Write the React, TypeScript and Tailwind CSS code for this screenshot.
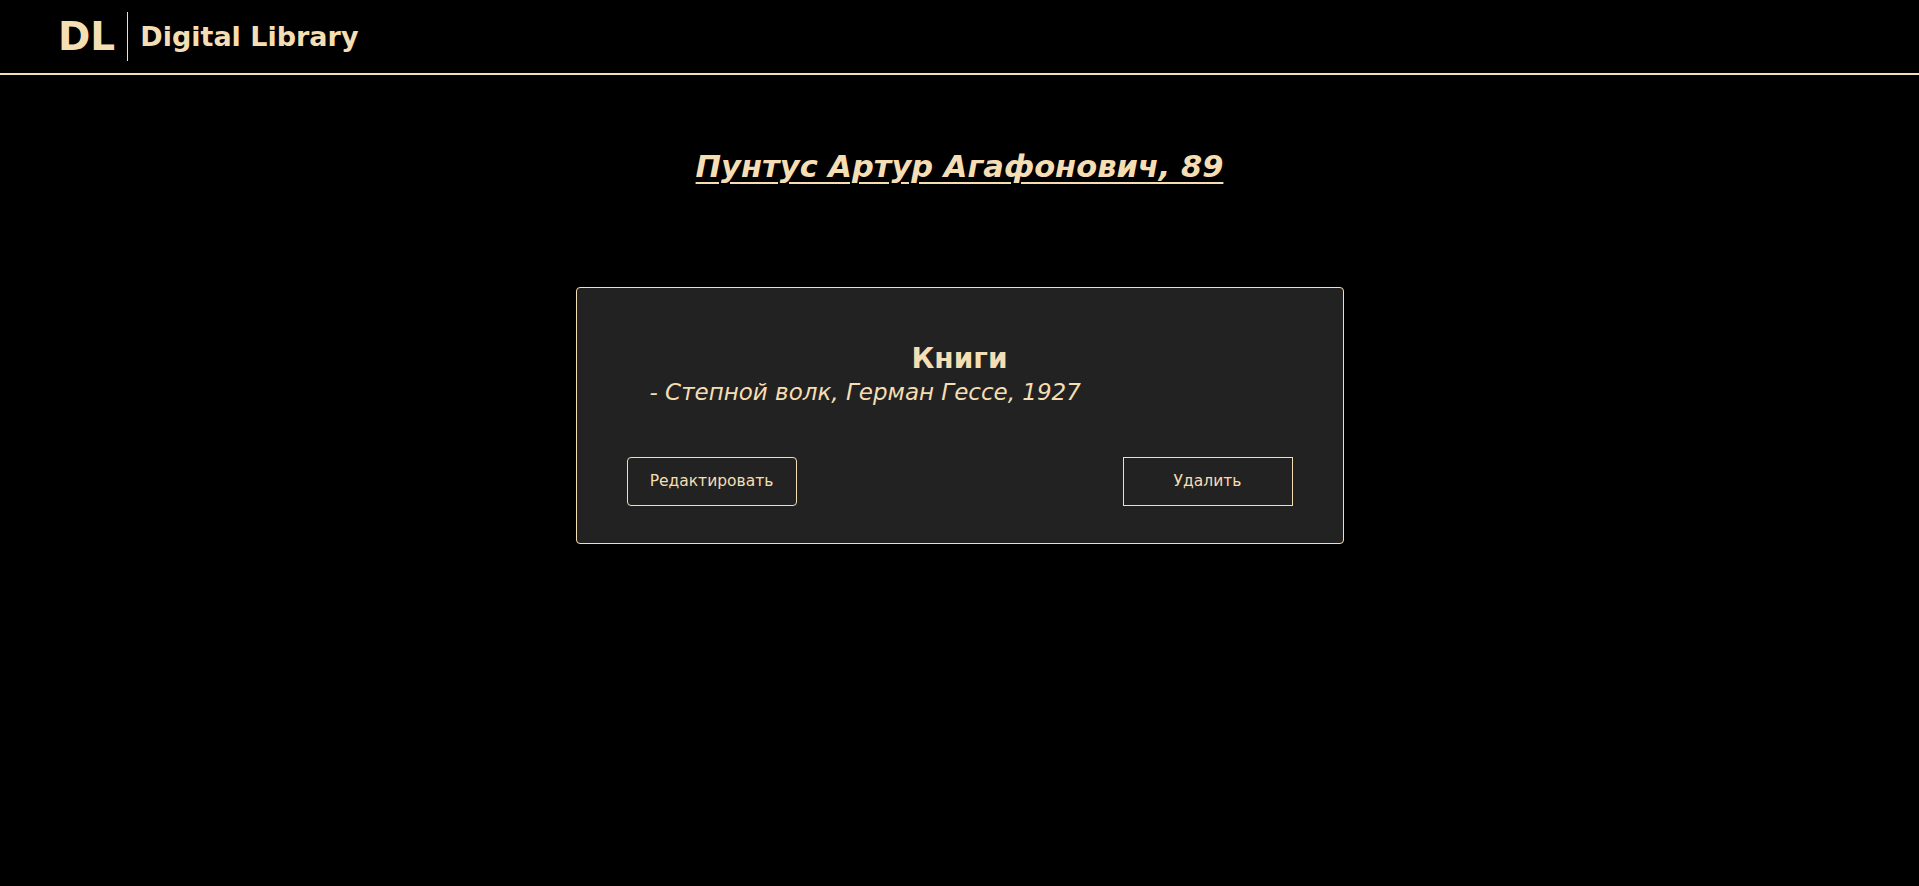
export default function App() {
  const font = { fontFamily: "'DejaVu Sans', 'Liberation Sans', sans-serif" };
  return (
    <div className="min-h-screen bg-black text-[#f5deb3]" style={font}>
      {/* Header */}
      <header className="h-[75px] border-b-2 border-[#f5deb3] flex items-center pl-[58px]">
        <div className="flex items-center">
          <span className="text-[39px] font-bold leading-none">DL</span>
          <span className="w-px h-[49px] bg-[#f5deb3] mx-[12px]" />
          <span className="text-[27px] font-bold leading-none">Digital Library</span>
        </div>
      </header>

      <main className="flex flex-col items-center">
        <h1 className="mt-[69px] text-[30.5px] font-bold italic underline underline-offset-[5px] decoration-2">
          Пунтус Артур Агафонович, 89
        </h1>

        <section className="mt-[97px] w-[768px] bg-[#222222] border border-[#f5deb3] rounded-[4px] px-[50px] pt-[53px] pb-[37px]">
          <h2 className="text-center text-[28px] font-bold leading-[36px]">Книги</h2>
          <ul className="pl-[23px]">
            <li className="text-[23px] italic leading-[31px]">- Степной волк, Герман Гессе, 1927</li>
          </ul>
          <div className="mt-[49px] flex justify-between">
            <button className="w-[170px] h-[49px] border border-[#f5deb3] rounded-[4px] text-[15.5px]">
              Редактировать
            </button>
            <button className="w-[170px] h-[49px] border border-[#f5deb3] text-[15.5px]">
              Удалить
            </button>
          </div>
        </section>
      </main>
    </div>
  );
}
